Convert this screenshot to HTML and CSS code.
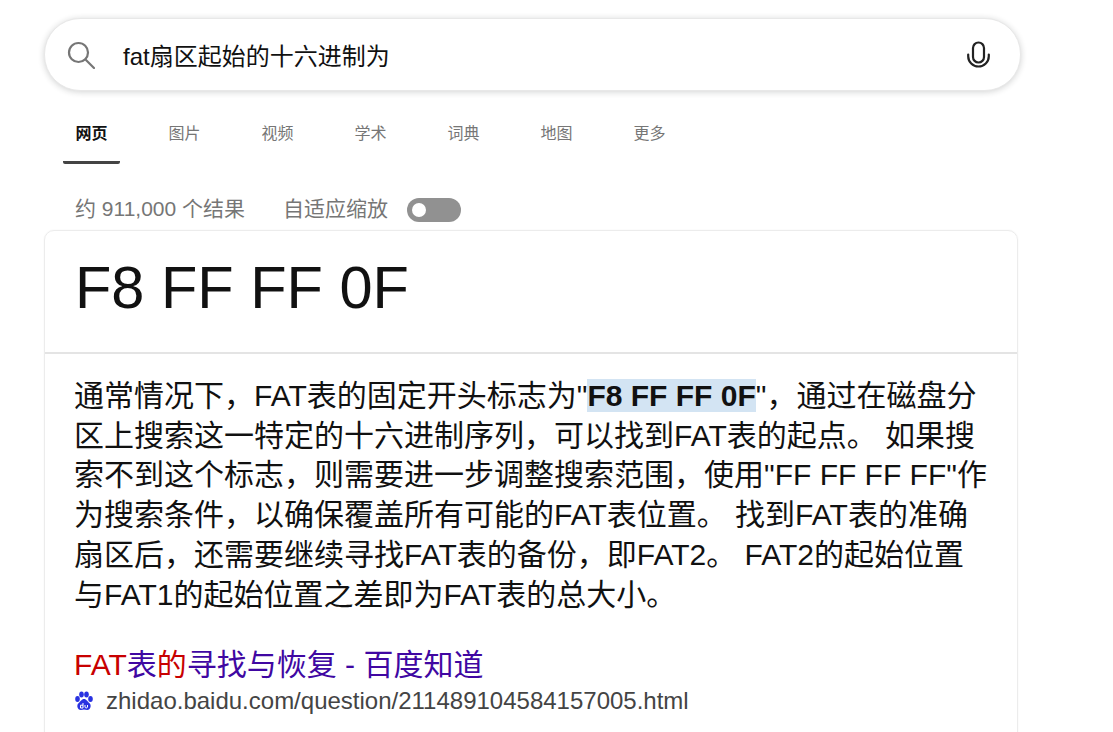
FILE: index.html
```html
<!DOCTYPE html>
<html lang="zh-CN">
<head>
<meta charset="utf-8">
<title>fat扇区起始的十六进制为</title>
<link rel="stylesheet" href="styles.css">
</head>
<body>
<div class="page">
  <div class="search">
    <svg class="search-icon" viewBox="0 0 28 28" width="28" height="28"><circle cx="11.5" cy="11.5" r="9.5" fill="none" stroke="#767676" stroke-width="2.200"/><path d="M18.500 18.500L27 27" fill="none" stroke="#767676" stroke-width="2.200" stroke-linecap="round"/></svg>
    <div class="query">fat扇区起始的十六进制为</div>
    <svg class="mic" viewBox="0 0 24 28" width="24" height="28"><rect x="7" y="1.500" width="11" height="20" rx="5.500" fill="none" stroke="#222" stroke-width="2.200"/><path d="M2.200 13.500v1.700a10.300 10.300 0 0 0 20.600 0v-1.700" fill="none" stroke="#222" stroke-width="2.200" stroke-linecap="round"/></svg>
  </div>
  <nav class="tabs">
    <a class="tab active">网页</a>
    <a class="tab">图片</a>
    <a class="tab">视频</a>
    <a class="tab">学术</a>
    <a class="tab">词典</a>
    <a class="tab">地图</a>
    <a class="tab">更多</a>
  </nav>
  <div class="meta">
    <span class="count">约 911,000 个结果</span>
    <span class="zoom">自适应缩放</span>
    <span class="toggle"><span class="knob"></span></span>
  </div>
  <section class="card">
    <h1 class="answer">F8 FF FF 0F</h1>
    <div class="body">
      <p class="text">通常情况下，FAT表的固定开头标志为"<mark class="hl">F8 FF FF 0F</mark>"，通过在磁盘分区上搜索这一特定的十六进制序列，可以找到FAT表的起点。 如果搜索不到这个标志，则需要进一步调整搜索范围，使用"FF FF FF FF"作为搜索条件，以确保覆盖所有可能的FAT表位置。 找到FAT表的准确扇区后，还需要继续寻找FAT表的备份，即FAT2。 FAT2的起始位置与FAT1的起始位置之差即为FAT表的总大小。</p>
      <a class="link"><span class="red">FAT</span>表<span class="red">的</span>寻找与恢复 - 百度知道</a>
      <div class="source">
        <svg class="favicon" viewBox="0 0 20 20" width="20" height="20"><g fill="#2932e1"><ellipse cx="3.500" cy="8" rx="2.300" ry="2.900"/><ellipse cx="7.500" cy="3.500" rx="2.300" ry="2.900"/><ellipse cx="12.500" cy="3.500" rx="2.300" ry="2.900"/><ellipse cx="16.500" cy="8" rx="2.300" ry="2.900"/><path d="M10 8c-2.500 0-3.200 2.500-5.500 4.200-2.200 1.800-1.200 6.800 2.300 6.800 1.300 0 2.200-.4 3.200-.4s1.900.4 3.200.4c3.500 0 4.500-5 2.300-6.800C13.200 10.500 12.500 8 10 8z"/></g><path d="M9 12v5H6.500v-2.800H9M11 14v2c0 1.300 2.500 1.300 2.500 0v-2" fill="none" stroke="#fff" stroke-width="1"/></svg>
        <span class="url">zhidao.baidu.com/question/211489104584157005.html</span>
      </div>
    </div>
  </section>
</div>
</body>
</html>
```
FILE: styles.css
```css
html, body {
  margin: 0;
  height: 100%;
  overflow: hidden;
  background: #fff;
}
body {
  font-family: "Liberation Sans", "Noto Sans CJK SC", sans-serif;
  color: #111;
}
.page {
  height: 100vh;
  box-sizing: border-box;
  overflow: hidden;
  padding: 18px 0 0 44px;
}
.search {
  display: flex;
  align-items: center;
  height: 73px;
  box-sizing: border-box;
  border: 1px solid #e8e8e8;
  border-radius: 36px;
  box-shadow: 0 1px 6px rgba(32, 33, 36, 0.2);
  padding: 0 30px 0 22px;
  width: 977px;
  background: #fff;
}
.search-icon { flex: none; }
.query {
  flex: 1;
  margin-left: 28px;
  font-size: 24px;
  color: #111;
}
.mic { flex: none; }
.tabs {
  display: flex;
  margin-top: 23px;
  height: 50px;
  padding-left: 19px;
}
.tab {
  width: 57px;
  margin-right: 36px;
  text-align: center;
  font-size: 16px;
  line-height: 40px;
  color: #767676;
}
.active {
  height: 50px;
  box-sizing: border-box;
  color: #111;
  font-weight: 700;
  border-bottom: 3px solid #444;
  border-radius: 0 0 2px 2px;
}
.meta {
  display: flex;
  align-items: center;
  height: 42px;
  margin-top: 22px;
  padding-left: 31px;
  font-size: 21px;
  color: #767676;
}
.zoom { margin-left: 38px; }
.toggle {
  display: flex;
  align-items: center;
  width: 54px;
  height: 24px;
  margin: 6px 0 0 19px;
  border-radius: 12px;
  background: #919191;
}
.knob {
  width: 14px;
  height: 14px;
  margin-left: 5px;
  border-radius: 50%;
  background: #fff;
}
.card {
  width: 974px;
  box-sizing: border-box;
  border: 1px solid #ececec;
  border-radius: 10px;
  margin-top: 2px;
  padding-bottom: 60px;
  box-shadow: 0 0 2px rgba(0, 0, 0, 0.06);
}
.answer {
  margin: 0;
  height: 123px;
  box-sizing: border-box;
  padding: 26px 0 0 30px;
  font-size: 59.500px;
  line-height: 62px;
  font-weight: 400;
  color: #111;
  border-bottom: 2px solid #e4e4e4;
}
.body { padding: 22px 29px 0 29px; }
.text {
  margin: 0;
  font-size: 30px;
  line-height: 39.700px;
  color: #111;
}
.hl {
  font-weight: 700;
  background: #d3e4f3;
  color: #111;
}
.link {
  display: block;
  margin-top: 31px;
  font-size: 30px;
  line-height: 40px;
  color: #4007a2;
}
.red { color: #c80000; }
.source {
  display: flex;
  align-items: center;
  margin-top: 2px;
}
.favicon { flex: none; margin-right: 12px; }
.url {
  font-size: 24px;
  color: #444;
}
```
